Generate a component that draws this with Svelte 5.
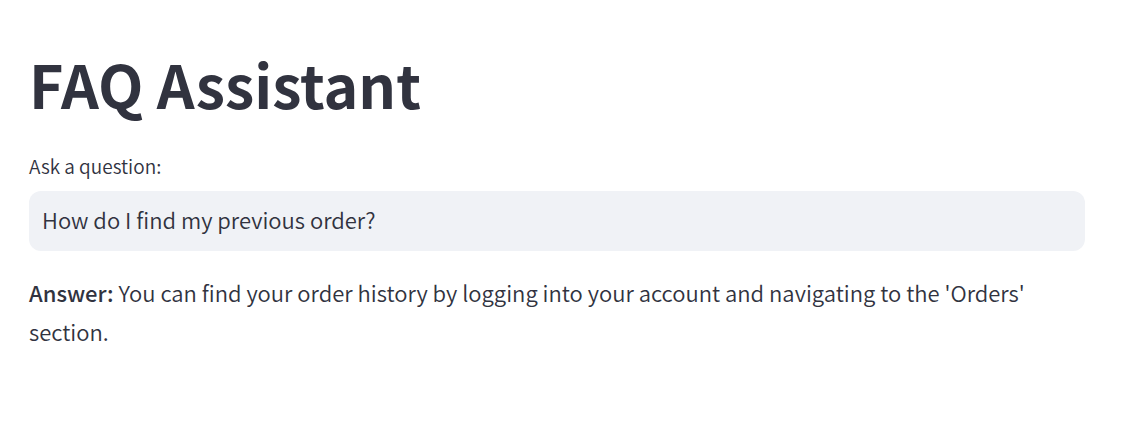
<script>
  let question = $state('How do I find my previous order?');
  const answer =
    "You can find your order history by logging into your account and navigating to the 'Orders' section.";
</script>

<main>
  <h1>FAQ Assistant</h1>
  <div class="field">
    <label for="question">Ask a question:</label>
    <input id="question" type="text" bind:value={question} />
  </div>
  <p><strong>Answer:</strong> {answer}</p>
</main>

<style>
  :global(body) {
    margin: 0;
    background: #ffffff;
  }

  main {
    padding: 44px 44px 48px 29px;
    color: #31333f;
    font-family: 'Noto Sans CJK SC', 'Open Sans', sans-serif;
    font-weight: 350;
  }

  h1 {
    margin: 0;
    font-size: 59px;
    line-height: 80px;
    font-weight: 700;
  }

  .field {
    display: flex;
    flex-direction: column;
    gap: 10px;
    margin-top: 26px;
  }

  label {
    font-size: 19px;
    line-height: 31px;
  }

  input {
    box-sizing: border-box;
    width: 100%;
    height: 60px;
    padding: 0 13px 4px;
    border: 0;
    border-radius: 12px;
    outline: none;
    background: #f0f2f6;
    color: inherit;
    font: inherit;
    font-size: 22px;
  }

  p {
    margin: 22px 0 0;
    font-size: 22px;
    line-height: 39px;
  }

  strong {
    font-weight: 500;
  }
</style>
